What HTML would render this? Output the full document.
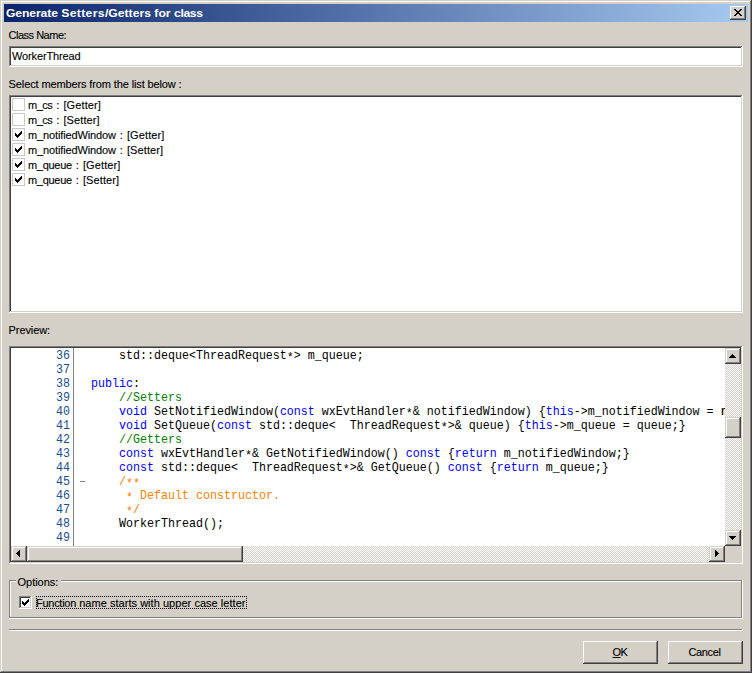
<!DOCTYPE html>
<html>
<head>
<meta charset="utf-8">
<title>Generate Setters/Getters for class</title>
<style>
html,body{margin:0;padding:0;}
body{width:752px;height:673px;overflow:hidden;background:#d4d0c8;font-family:"Liberation Sans",sans-serif;font-size:11px;color:#000;position:relative;}
.abs{position:absolute;}
#title{position:absolute;left:4px;top:4px;width:744px;height:18px;background:linear-gradient(to right,#0a246a 0%,#a6caf0 100%);}
#title>span{position:absolute;left:1.6px;top:0;line-height:18px;color:#fff;font-weight:bold;font-size:11px;white-space:nowrap;transform-origin:0 0;transform:scaleX(1.108);}
.lbl{-webkit-text-stroke:0.12px #000;position:absolute;white-space:nowrap;line-height:13px;height:13px;font-size:11px;}
.sunken,.btn,.sbtn{position:absolute;box-sizing:border-box;border:1px solid transparent;}
.sunken::before,.btn::before,.sbtn::before{content:"";position:absolute;left:-1px;top:-1px;right:-1px;bottom:-1px;}
.sunken{background:#fff;}
.sunken::before{box-shadow:inset -1px -1px 0 #fff,inset 1px 1px 0 #808080,inset -2px -2px 0 #d4d0c8,inset 2px 2px 0 #404040;}
.btn,.sbtn{background:#d4d0c8;}
.btn::before{box-shadow:inset -1px -1px 0 #404040,inset 1px 1px 0 #fff,inset -2px -2px 0 #808080,inset 2px 2px 0 #d4d0c8;}
.sbtn::before{box-shadow:inset -1px -1px 0 #404040,inset 1px 1px 0 #d4d0c8,inset -2px -2px 0 #808080,inset 2px 2px 0 #fff;}
.track{position:absolute;background:repeating-conic-gradient(#fff 0 25%,#d4d0c8 0 50%) 0 0/2px 2px;}
.cb{position:absolute;width:13px;height:13px;box-sizing:border-box;background:#fff;border:1px solid #c8c8c8;}
.cb svg,.cb3 svg{position:absolute;left:2px;top:2px;}
.item{-webkit-text-stroke:0.12px #000;position:absolute;left:28px;word-spacing:1.0px;margin-top:1px;white-space:nowrap;line-height:13px;font-size:11px;}
#code{position:absolute;left:11px;top:348px;width:714px;height:198px;overflow:hidden;background:#fff;}
.ln{position:absolute;left:0;width:59px;text-align:right;height:14px;line-height:14px;color:#184e98;font-family:"Liberation Mono",monospace;font-size:11.667px;white-space:pre;margin-top:1px;transform-origin:59px 11px;transform:scale(1.0,1.15);}
.cl{position:absolute;left:80px;height:14px;line-height:14px;font-family:"Liberation Mono",monospace;font-size:11.667px;white-space:pre;color:#000;margin-top:1px;transform-origin:0 11px;transform:scaleY(1.15);}
.a{position:relative;top:1.5px;}
.k{color:#0000ff;} .c{color:#008000;} .d{color:#ff8000;}
</style>
</head>
<body>
<div class="abs" style="left:0;top:0;width:752px;height:673px;background:#d4d0c8;"></div>
<div class="abs" style="left:1px;top:1px;width:749px;height:1px;background:#fff;"></div><div class="abs" style="left:1px;top:1px;width:1px;height:670px;background:#fff;"></div><div class="abs" style="left:1px;top:671px;width:750px;height:1px;background:#808080;"></div><div class="abs" style="left:750px;top:1px;width:1px;height:671px;background:#808080;"></div><div class="abs" style="left:0;top:672px;width:752px;height:1px;background:#404040;"></div><div class="abs" style="left:751px;top:0;width:1px;height:673px;background:#404040;"></div>
<div id="title"><span><span style="letter-spacing:-0.12px">Generate</span> <span style="letter-spacing:0.31px">Setters</span>/Getters for <span style="letter-spacing:-0.33px">class</span></span></div>
<!-- close button -->
<div class="btn" style="left:730px;top:6px;width:16px;height:14px;">
<svg class="abs" style="left:3px;top:2px" width="9" height="8" viewBox="0 0 9 8" shape-rendering="crispEdges"><path d="M0 0h2v1h-2zM6 0h2v1h-2zM1 1h2v1h-2zM5 1h2v1h-2zM2 2h4v1h-4zM3 3h2v1h-2zM2 4h4v1h-4zM1 5h2v1h-2zM5 5h2v1h-2zM0 6h2v1h-2zM6 6h2v1h-2z" fill="#000"/></svg>
</div>

<div class="lbl" style="left:8.6px;top:29px;letter-spacing:-0.5px;">Class Name:</div>
<div class="sunken" style="left:9px;top:46px;width:734px;height:21px;">
  <div class="lbl" style="left:2px;top:3px;letter-spacing:-0.13px;">WorkerThread</div>
</div>
<div class="lbl" style="left:8.6px;top:78px;letter-spacing:-0.12px;">Select members from the list below :</div>

<!-- list -->
<div class="sunken" style="left:9px;top:95px;width:734px;height:218px;"></div>
<div id="list">
<div class="cb" style="left:12px;top:98px;"></div><div class="item" style="top:98px;"><span style="letter-spacing:-0.5px">m_cs</span> : <span style="letter-spacing:0.1px">[Getter]</span></div>
<div class="cb" style="left:12px;top:113px;"></div><div class="item" style="top:113px;"><span style="letter-spacing:-0.5px">m_cs</span> : <span style="letter-spacing:0.1px">[Setter]</span></div>
<div class="cb" style="left:12px;top:128px;"><svg width="7" height="7" viewBox="0 0 7 7" shape-rendering="crispEdges"><path d="M0 2h1v3h-1zM1 3h1v3h-1zM2 4h1v3h-1zM3 3h1v3h-1zM4 2h1v3h-1zM5 1h1v3h-1zM6 0h1v3h-1z" fill="#000"/></svg></div><div class="item" style="top:128px;"><span style="letter-spacing:-0.13px">m_notifiedWindow</span> : <span style="letter-spacing:0.1px">[Getter]</span></div>
<div class="cb" style="left:12px;top:143px;"><svg width="7" height="7" viewBox="0 0 7 7" shape-rendering="crispEdges"><path d="M0 2h1v3h-1zM1 3h1v3h-1zM2 4h1v3h-1zM3 3h1v3h-1zM4 2h1v3h-1zM5 1h1v3h-1zM6 0h1v3h-1z" fill="#000"/></svg></div><div class="item" style="top:143px;"><span style="letter-spacing:-0.13px">m_notifiedWindow</span> : <span style="letter-spacing:0.1px">[Setter]</span></div>
<div class="cb" style="left:12px;top:158px;"><svg width="7" height="7" viewBox="0 0 7 7" shape-rendering="crispEdges"><path d="M0 2h1v3h-1zM1 3h1v3h-1zM2 4h1v3h-1zM3 3h1v3h-1zM4 2h1v3h-1zM5 1h1v3h-1zM6 0h1v3h-1z" fill="#000"/></svg></div><div class="item" style="top:158px;"><span style="letter-spacing:-0.3px">m_queue</span> : <span style="letter-spacing:0.1px">[Getter]</span></div>
<div class="cb" style="left:12px;top:173px;"><svg width="7" height="7" viewBox="0 0 7 7" shape-rendering="crispEdges"><path d="M0 2h1v3h-1zM1 3h1v3h-1zM2 4h1v3h-1zM3 3h1v3h-1zM4 2h1v3h-1zM5 1h1v3h-1zM6 0h1v3h-1z" fill="#000"/></svg></div><div class="item" style="top:173px;"><span style="letter-spacing:-0.3px">m_queue</span> : <span style="letter-spacing:0.1px">[Setter]</span></div>
</div>

<div class="lbl" style="left:8.6px;top:324px;letter-spacing:-0.1px;">Preview:</div>
<!-- preview -->
<div class="sunken" style="left:9px;top:346px;width:734px;height:218px;"></div>
<div id="code">
<div class="abs" style="left:62px;top:0;width:1px;height:198px;background:#808080;"></div>
<div class="ln" style="top:0px;">36</div><div class="cl" style="top:0px;">    std::deque&lt;ThreadRequest<span class="a">*</span>&gt; m_queue;</div>
<div class="ln" style="top:14px;">37</div><div class="cl" style="top:14px;"></div>
<div class="ln" style="top:28px;">38</div><div class="cl" style="top:28px;"><span class="k">public</span>:</div>
<div class="ln" style="top:42px;">39</div><div class="cl" style="top:42px;">    <span class="c">//Setters</span></div>
<div class="ln" style="top:56px;">40</div><div class="cl" style="top:56px;">    <span class="k">void</span> SetNotifiedWindow(<span class="k">const</span> wxEvtHandler<span class="a">*</span>&amp; notifiedWindow) {<span class="k">this</span>-&gt;m_notifiedWindow = <span style="display:inline-block;transform-origin:0 0;transform:scaleX(1.35);">m</span></div>
<div class="ln" style="top:70px;">41</div><div class="cl" style="top:70px;">    <span class="k">void</span> SetQueue(<span class="k">const</span> std::deque&lt;  ThreadRequest<span class="a">*</span>&gt;&amp; queue) {<span class="k">this</span>-&gt;m_queue = queue;}</div>
<div class="ln" style="top:84px;">42</div><div class="cl" style="top:84px;">    <span class="c">//Getters</span></div>
<div class="ln" style="top:98px;">43</div><div class="cl" style="top:98px;">    <span class="k">const</span> wxEvtHandler<span class="a">*</span>&amp; GetNotifiedWindow() <span class="k">const</span> {<span class="k">return</span> m_notifiedWindow;}</div>
<div class="ln" style="top:112px;">44</div><div class="cl" style="top:112px;">    <span class="k">const</span> std::deque&lt;  ThreadRequest<span class="a">*</span>&gt;&amp; GetQueue() <span class="k">const</span> {<span class="k">return</span> m_queue;}</div>
<div class="ln" style="top:126px;">45</div><div class="cl" style="top:126px;">    <span class="d">/<span class="a">*</span><span class="a">*</span></span></div>
<div class="ln" style="top:140px;">46</div><div class="cl" style="top:140px;">    <span class="d"> <span class="a">*</span> Default constructor.</span></div>
<div class="ln" style="top:154px;">47</div><div class="cl" style="top:154px;">    <span class="d"> <span class="a">*</span>/</span></div>
<div class="ln" style="top:168px;">48</div><div class="cl" style="top:168px;">    WorkerThread();</div>
<div class="ln" style="top:182px;">49</div><div class="cl" style="top:182px;"></div>
<div class="abs" style="left:69px;top:133px;width:5px;height:1px;background:#808080;"></div>
</div>

<!-- vertical scrollbar -->
<div class="track" style="left:725px;top:348px;width:16px;height:198px;"></div>
<div class="sbtn" style="left:725px;top:348px;width:16px;height:16px;">
<svg class="abs" style="left:3px;top:5px" width="7" height="4" viewBox="0 0 7 4" shape-rendering="crispEdges"><path d="M3 0h1v1h-1zM2 1h3v1h-3zM1 2h5v1h-5zM0 3h7v1h-7z" fill="#000"/></svg></div>
<div class="sbtn" style="left:725px;top:417px;width:16px;height:21px;"></div>
<div class="sbtn" style="left:725px;top:530px;width:16px;height:16px;">
<svg class="abs" style="left:3px;top:5px" width="7" height="4" viewBox="0 0 7 4" shape-rendering="crispEdges"><path d="M0 0h7v1h-7zM1 1h5v1h-5zM2 2h3v1h-3zM3 3h1v1h-1z" fill="#000"/></svg></div>
<!-- horizontal scrollbar -->
<div class="track" style="left:11px;top:546px;width:714px;height:16px;"></div>
<div class="sbtn" style="left:11px;top:546px;width:16px;height:16px;">
<svg class="abs" style="left:4px;top:3px" width="4" height="7" viewBox="0 0 4 7" shape-rendering="crispEdges"><path d="M3 0h1v7h-1zM2 1h1v5h-1zM1 2h1v3h-1zM0 3h1v1h-1z" fill="#000"/></svg></div>
<div class="sbtn" style="left:27px;top:546px;width:216px;height:16px;"></div>
<div class="sbtn" style="left:709px;top:546px;width:16px;height:16px;">
<svg class="abs" style="left:5px;top:3px" width="4" height="7" viewBox="0 0 4 7" shape-rendering="crispEdges"><path d="M0 0h1v7h-1zM1 1h1v5h-1zM2 2h1v3h-1zM3 3h1v1h-1z" fill="#000"/></svg></div>
<div class="abs" style="left:725px;top:546px;width:16px;height:16px;background:#d4d0c8;"></div>

<!-- group box -->
<div class="abs" style="left:9px;top:580px;width:733px;height:1px;background:#808080;"></div><div class="abs" style="left:9px;top:580px;width:1px;height:38px;background:#808080;"></div><div class="abs" style="left:742px;top:580px;width:1px;height:39px;background:#fff;"></div><div class="abs" style="left:9px;top:618px;width:734px;height:1px;background:#fff;"></div>
<div class="abs" style="left:10px;top:581px;width:731px;height:1px;background:#fff;"></div><div class="abs" style="left:10px;top:581px;width:1px;height:36px;background:#fff;"></div><div class="abs" style="left:741px;top:581px;width:1px;height:37px;background:#808080;"></div><div class="abs" style="left:10px;top:617px;width:732px;height:1px;background:#808080;"></div>
<div class="abs" style="left:16px;top:575px;width:45px;height:13px;background:#d4d0c8;"></div>
<div class="lbl" style="left:17.6px;top:576px;letter-spacing:-0.05px;">Options:</div>
<!-- checkbox -->
<div class="sunken cb3" style="left:19px;top:596px;width:13px;height:13px;">
<svg width="7" height="7" viewBox="0 0 7 7" shape-rendering="crispEdges" style="left:2px;top:2px;"><path d="M0 2h1v3h-1zM1 3h1v3h-1zM2 4h1v3h-1zM3 3h1v3h-1zM4 2h1v3h-1zM5 1h1v3h-1zM6 0h1v3h-1z" fill="#000"/></svg></div>
<div class="abs" style="left:36px;top:596px;width:211px;height:13px;box-sizing:border-box;border:1px dotted #000;"></div>
<div class="lbl" style="left:36px;top:597px;letter-spacing:0.04px;"><span style="letter-spacing:-0.27px">Function</span> name starts with upper case letter</div>

<!-- separator -->
<div class="abs" style="left:9px;top:629px;width:733px;height:1px;background:#808080;"></div><div class="abs" style="left:742px;top:629px;width:1px;height:1px;background:#fff;"></div>
<div class="abs" style="left:9px;top:630px;width:734px;height:1px;background:#fff;"></div>

<!-- buttons -->
<div class="btn" style="left:583px;top:641px;width:75px;height:23px;">
<div class="lbl" style="left:-1.6px;top:4px;width:75px;text-align:center;letter-spacing:-0.6px;"><u>O</u>K</div></div>
<div class="btn" style="left:668px;top:641px;width:75px;height:23px;">
<div class="lbl" style="left:-2px;top:4px;width:75px;text-align:center;letter-spacing:-0.35px;">Cancel</div></div>

</body>
</html>
